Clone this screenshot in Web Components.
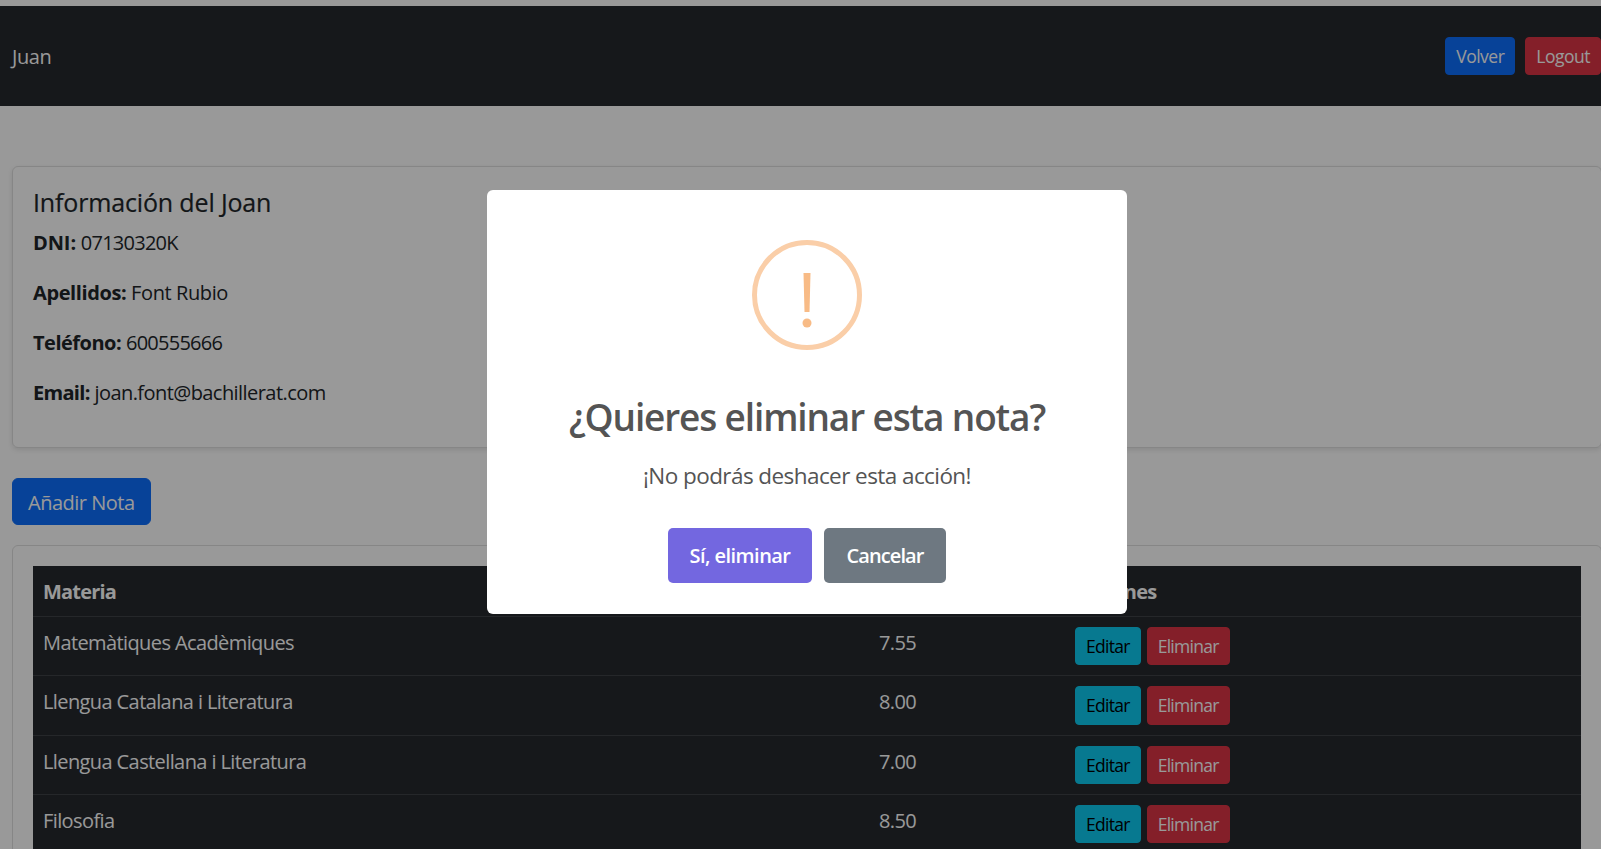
<!DOCTYPE html>
<html lang="es">
<head>
<meta charset="utf-8">
<title>Notas</title>
<style>
  html { overflow: hidden; }
  body {
    margin: 6px 0 0;
    height: 843px;
    overflow: hidden;
    background: #fff;
    color: #212529;
    font: 20px/1.5 "Open Sans", "Noto Sans", sans-serif;
    letter-spacing: -0.4px;
  }
</style>
</head>
<body>
  <app-navbar usuario="Juan"></app-navbar>
  <main-page></main-page>
  <confirm-modal titulo="¿Quieres eliminar esta nota?" texto="¡No podrás deshacer esta acción!"></confirm-modal>

<script>
const btnColors = {
  primary: 'background:#0d6efd;border-color:#0d6efd;color:#fff',
  danger: 'background:#dc3545;border-color:#dc3545;color:#fff',
  info: 'background:#0dcaf0;border-color:#0dcaf0;color:#000'
};

class UiBtn extends HTMLElement {
  constructor() {
    super();
    this.shadow = this.attachShadow({ mode: 'open' });
  }

  connectedCallback() {
    const color = btnColors[this.getAttribute('color') || 'primary'];
    const sm = this.hasAttribute('sm');
    this.shadow.innerHTML = `
      <style>
        :host { display: inline-block; }
        button {
          display: block;
          font: inherit;
          letter-spacing: var(--btn-ls, -0.5px);
          box-sizing: border-box;
          border: 1px solid;
          cursor: pointer;
          font-size: ${sm ? '17.5px' : '20px'};
          line-height: 1.5;
          padding: ${sm ? '5px 10px' : '8.5px 15px 6.5px'};
          border-radius: ${sm ? '4px' : '6px'};
          ${color};
        }
      </style>
      <button><slot></slot></button>
    `;
  }
}

class AppNavbar extends HTMLElement {
  constructor() {
    super();
    this.shadow = this.attachShadow({ mode: 'open' });
  }

  connectedCallback() {
    this.shadow.innerHTML = `
      <style>
        :host { display: block; }
        nav {
          height: 100px;
          background: #25282e;
          color: #fff;
          display: flex;
          align-items: center;
          justify-content: space-between;
          padding-left: 12px;
        }
        span { padding-top: 2px; }
        .acciones { display: flex; gap: 10px; }
      </style>
      <nav>
        <span>${this.getAttribute('usuario')}</span>
        <div class="acciones">
          <ui-btn sm color="primary">Volver</ui-btn>
          <ui-btn sm color="danger">Logout</ui-btn>
        </div>
      </nav>
    `;
  }
}

class InfoCard extends HTMLElement {
  constructor() {
    super();
    this.shadow = this.attachShadow({ mode: 'open' });
  }

  connectedCallback() {
    this.shadow.innerHTML = `
      <style>
        :host { display: block; }
        .card {
          border: 1px solid rgba(0,0,0,.125);
          border-radius: 6px;
          padding: 20px;
          box-shadow: 0 2px 5px rgba(0,0,0,.1);
        }
        h5 { margin: 0 0 10px; font-size: 25px; line-height: 1.2; font-weight: 500; letter-spacing: -0.15px; -webkit-text-stroke: .2px; }
        p { margin: 0 0 19px; padding-top: 1px; }
        b { font-weight: 700; }
        .num { letter-spacing: -0.75px; }
        .mail { letter-spacing: -0.56px; }
      </style>
      <div class="card">
        <h5>Información del Joan</h5>
        <p><b style="letter-spacing:-0.1px">DNI:</b> <span class="num">07130320K</span></p>
        <p><b>Apellidos:</b> Font Rubio</p>
        <p><b style="letter-spacing:-0.5px">Teléfono:</b> <span class="num">600555666</span></p>
        <p><b style="letter-spacing:-0.7px">Email:</b> <span class="mail">joan.font@bachillerat.com</span></p>
      </div>
    `;
  }
}

class NotasTabla extends HTMLElement {
  constructor() {
    super();
    this.shadow = this.attachShadow({ mode: 'open' });
    this.notas = [
      { materia: 'Matemàtiques Acadèmiques', nota: '7.55' },
      { materia: 'Llengua Catalana i Literatura', nota: '8.00' },
      { materia: 'Llengua Castellana i Literatura', nota: '7.00' },
      { materia: 'Filosofia', nota: '8.50' }
    ];
  }

  connectedCallback() {
    this.shadow.innerHTML = `
      <style>
        :host { display: block; --btn-ls: -0.72px; }
        .card {
          border: 1px solid rgba(0,0,0,.125);
          border-radius: 6px;
          padding: 20px;
        }
        table {
          width: 100%;
          table-layout: fixed;
          border-collapse: collapse;
          background: #25282e;
          color: #fff;
        }
        th, td {
          padding: 11px 10px 9px;
          border-bottom: 1px solid #3e4147;
          text-align: left;
          vertical-align: top;
          letter-spacing: -0.6px;
        }
        th { font-weight: 700; letter-spacing: -0.8px; }
        td.acc { padding: 10px; }
        .btns { display: flex; gap: 6px; }
      </style>
      <div class="card">
        <table>
          <colgroup><col style="width:836px"><col style="width:196px"><col></colgroup>
          <tr><th>Materia</th><th>Nota</th><th>Acciones</th></tr>
          ${this.notas.map(n => `
            <tr>
              <td>${n.materia}</td>
              <td>${n.nota}</td>
              <td class="acc">
                <div class="btns">
                  <ui-btn sm color="info">Editar</ui-btn>
                  <ui-btn sm color="danger">Eliminar</ui-btn>
                </div>
              </td>
            </tr>
          `).join('')}
        </table>
      </div>
    `;
  }
}

class MainPage extends HTMLElement {
  constructor() {
    super();
    this.shadow = this.attachShadow({ mode: 'open' });
  }

  connectedCallback() {
    this.shadow.innerHTML = `
      <style>
        :host { display: block; padding: 60px 0 0 12px; margin-right: -1px; }
        ui-btn { margin: 30px 0 20px; display: block; width: max-content; }
      </style>
      <info-card></info-card>
      <ui-btn color="primary">Añadir Nota</ui-btn>
      <notas-tabla></notas-tabla>
    `;
  }
}

class ConfirmModal extends HTMLElement {
  constructor() {
    super();
    this.shadow = this.attachShadow({ mode: 'open' });
  }

  connectedCallback() {
    this.shadow.innerHTML = `
      <style>
        :host {
          position: fixed;
          inset: 0;
          background: rgba(0,0,0,.4);
          display: flex;
          justify-content: center;
          align-items: flex-start;
          padding: 190px 0 0 13px;
        }
        .popup {
          width: 640px;
          box-sizing: border-box;
          height: 424px;
          background: #fff;
          border-radius: 6px;
          color: #545454;
          text-align: center;
          display: flex;
          flex-direction: column;
          align-items: center;
          padding-top: 50px;
        }
        svg { display: block; width: 110px; height: 110px; }
        h2 { margin: 44.500px 0 0; font-size: 37px; line-height: 1.2; font-weight: 600; letter-spacing: -1.14px; white-space: nowrap; }
        p { margin: 20px 0 0; font-size: 22.5px; line-height: 1.5; letter-spacing: -0.57px; }
        .acciones { display: flex; gap: 12px; margin-top: 35px; }
        button {
          font: inherit;
          font-weight: 600;
          color: #fff;
          border: 0;
          border-radius: 5px;
          height: 55px;
          cursor: pointer;
          padding: 2px 0 0;
        }
        .si { background: #7367e0; width: 144px; letter-spacing: -0.55px; }
        .no { background: #6e7881; width: 122px; letter-spacing: -0.9px; }
      </style>
      <div class="popup">
        <svg viewBox="0 0 110 110">
          <circle cx="55" cy="55" r="52.5" fill="none" stroke="#facea8" stroke-width="5"/>
          <path d="M51.500 33 h7 l-1 39 h-5 z" fill="#f8bb86"/>
          <circle cx="55" cy="83" r="4.500" fill="#f8bb86"/>
        </svg>
        <h2>${this.getAttribute('titulo')}</h2>
        <p>${this.getAttribute('texto')}</p>
        <div class="acciones">
          <button class="si">Sí, eliminar</button>
          <button class="no">Cancelar</button>
        </div>
      </div>
    `;
  }
}

customElements.define('ui-btn', UiBtn);
customElements.define('app-navbar', AppNavbar);
customElements.define('info-card', InfoCard);
customElements.define('notas-tabla', NotasTabla);
customElements.define('main-page', MainPage);
customElements.define('confirm-modal', ConfirmModal);
</script>
</body>
</html>
